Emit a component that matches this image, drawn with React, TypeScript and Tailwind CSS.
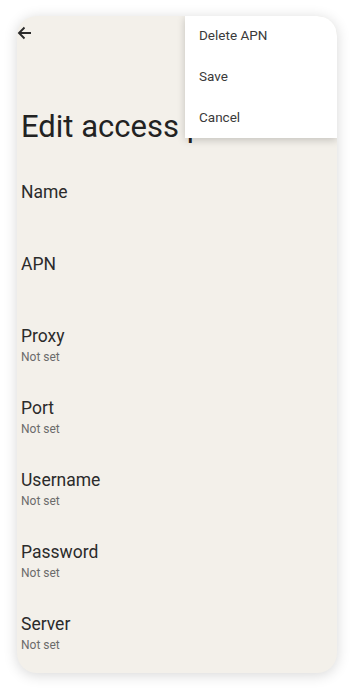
import React from "react";

const items: { title: string; summary?: string }[] = [
  { title: "Name" },
  { title: "APN" },
  { title: "Proxy", summary: "Not set" },
  { title: "Port", summary: "Not set" },
  { title: "Username", summary: "Not set" },
  { title: "Password", summary: "Not set" },
  { title: "Server", summary: "Not set" },
];

export default function App() {
  return (
    <div
      className="w-[355px] h-[689px] bg-white pt-[16px] pl-[17px]"
      style={{ fontFamily: "Roboto, 'Noto Sans', sans-serif" }}
    >
      <div className="relative w-[320px] h-[657px] rounded-[20px] overflow-hidden bg-[#f3f0ea] shadow-[0_2px_14px_rgba(0,0,0,0.16)]">
        <div className="flex flex-col">
          <div className="h-[34px] flex items-center">
            <svg width="15" height="14" viewBox="0 0 15 14">
              <path
                d="M14 7H2M7.5 1.5L2 7l5.5 5.5"
                fill="none"
                stroke="#2a2a2a"
                strokeWidth="1.9"
              />
            </svg>
          </div>
          <div className="pl-[4px] mt-[59px] h-[36px] leading-[36px] text-[31px] text-[#222] whitespace-nowrap">
            Edit access point
          </div>
          <div className="mt-[23px] flex flex-col pl-[4px]">
            {items.map((it) => (
              <div key={it.title} className="h-[72px] pt-[13px]">
                <div className="text-[17.5px] leading-[22px] text-[#2b2b2b]">{it.title}</div>
                {it.summary && (
                  <div className="mt-[2px] text-[12px] leading-[16px] text-[#6b6b6b]">
                    {it.summary}
                  </div>
                )}
              </div>
            ))}
          </div>
        </div>
        <div className="absolute top-0 right-0 w-[152px] h-[122px] bg-white shadow-[0_2px_8px_rgba(0,0,0,0.2)] flex flex-col">
          {["Delete APN", "Save", "Cancel"].map((t) => (
            <div
              key={t}
              className="h-[41.5px] first:-mt-[1px] flex items-center pl-[14px] text-[13.5px] text-[#3a3a3a]"
            >
              {t}
            </div>
          ))}
        </div>
      </div>
    </div>
  );
}
